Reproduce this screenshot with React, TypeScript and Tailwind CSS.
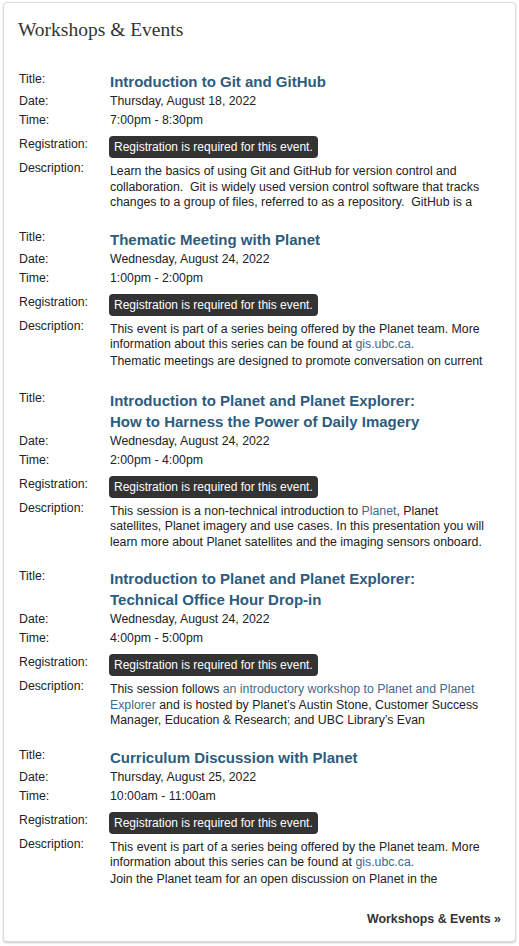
import React from "react";

type Seg = { t: string; link?: boolean };
type Line = { segs: Seg[]; para?: boolean };
type Ev = {
  title: string[];
  date: string;
  time: string;
  desc: Line[];
};

const L = (t: string, para?: boolean): Line => ({ segs: [{ t }], para });

const series: Line[] = [
  L("This event is part of a series being offered by the Planet team. More"),
  {
    segs: [
      { t: "information about this series can be found at " },
      { t: "gis.ubc.ca.", link: true },
    ],
  },
];

const events: Ev[] = [
  {
    title: ["Introduction to Git and GitHub"],
    date: "Thursday, August 18, 2022",
    time: "7:00pm - 8:30pm",
    desc: [
      L("Learn the basics of using Git and GitHub for version control and"),
      L("collaboration.  Git is widely used version control software that tracks"),
      L("changes to a group of files, referred to as a repository.  GitHub is a"),
    ],
  },
  {
    title: ["Thematic Meeting with Planet"],
    date: "Wednesday, August 24, 2022",
    time: "1:00pm - 2:00pm",
    desc: [...series, L("Thematic meetings are designed to promote conversation on current", true)],
  },
  {
    title: ["Introduction to Planet and Planet Explorer:", "How to Harness the Power of Daily Imagery"],
    date: "Wednesday, August 24, 2022",
    time: "2:00pm - 4:00pm",
    desc: [
      {
        segs: [
          { t: "This session is a non-technical introduction to " },
          { t: "Planet", link: true },
          { t: ", Planet" },
        ],
      },
      L("satellites, Planet imagery and use cases. In this presentation you will"),
      L("learn more about Planet satellites and the imaging sensors onboard."),
    ],
  },
  {
    title: ["Introduction to Planet and Planet Explorer:", "Technical Office Hour Drop-in"],
    date: "Wednesday, August 24, 2022",
    time: "4:00pm - 5:00pm",
    desc: [
      {
        segs: [
          { t: "This session follows " },
          { t: "an introductory workshop to Planet and Planet", link: true },
        ],
      },
      {
        segs: [
          { t: "Explorer", link: true },
          { t: " and is hosted by Planet\u2019s Austin Stone, Customer Success" },
        ],
      },
      L("Manager, Education & Research; and UBC Library\u2019s Evan"),
    ],
  },
  {
    title: ["Curriculum Discussion with Planet"],
    date: "Thursday, August 25, 2022",
    time: "10:00am - 11:00am",
    desc: [...series, L("Join the Planet team for an open discussion on Planet in the", true)],
  },
];

function Event({ ev }: { ev: Ev }) {
  const hasPara = ev.desc.some((l) => l.para);
  return (
    <div className="mb-[18px]">
      <div className="flex">
        <div className="w-[91px] shrink-0 leading-[16px]">Title:</div>
        <div className="text-[15px] font-bold leading-[21px] text-[#2c5c7e]">
          {ev.title.map((t, i) => (
            <div key={i}>{t}</div>
          ))}
        </div>
      </div>
      <div className="flex leading-[19px]">
        <div className="w-[91px] shrink-0">Date:</div>
        <div>{ev.date}</div>
      </div>
      <div className="flex leading-[19px]">
        <div className="w-[91px] shrink-0">Time:</div>
        <div>{ev.time}</div>
      </div>
      <div className="mt-[6px] flex">
        <div className="w-[91px] shrink-0 leading-[16px]">Registration:</div>
        <div className="-ml-px">
          <span className="inline-block h-[22px] rounded-[4px] bg-[#333333] px-[5px] pt-[1px] text-[12px] leading-[20px] text-white">
            Registration is required for this event.
          </span>
        </div>
      </div>
      <div className="mt-[3px] flex">
        <div className="w-[91px] shrink-0 leading-[15.5px]">Description:</div>
        <div
          className={
            "overflow-hidden pt-[3px] leading-[15.5px] " +
            (hasPara ? "h-[53px]" : "h-[49.5px]")
          }
        >
          {ev.desc.map((l, i) => (
            <div key={i} className={"whitespace-pre " + (l.para ? "mt-[1.5px]" : "")}>
              {l.segs.map((s, j) =>
                s.link ? (
                  <span key={j} className="text-[#3e6a8c]">
                    {s.t}
                  </span>
                ) : (
                  <span key={j}>{s.t}</span>
                )
              )}
            </div>
          ))}
        </div>
      </div>
    </div>
  );
}

export default function App() {
  return (
    <div className="min-h-[946px] w-[519px] bg-white pl-[3px] pt-[2px]">
      <div
        className="w-[513px] rounded-[4px] border border-[#dcdcdc] bg-white pb-[14px] pl-[15px] pr-[14px] pt-[14px] text-[12.3px] text-[#222222] shadow-[0_1px_2px_rgba(0,0,0,0.22)]"
        style={{ fontFamily: '"Liberation Sans", Arial, sans-serif' }}
      >
        <h2
          className="-ml-px mt-[1px] text-[19.5px] font-normal leading-[24px] text-[#333333]"
          style={{ fontFamily: '"Liberation Serif", Georgia, serif' }}
        >
          Workshops &amp; Events
        </h2>
        <div className="mt-[29px]">
          {events.map((ev, i) => (
            <Event key={i} ev={ev} />
          ))}
        </div>
        <div className="-mt-[15px] pt-[18px] text-right text-[12.4px] font-bold leading-[16px] text-[#333333]">
          Workshops &amp; Events »
        </div>
      </div>
    </div>
  );
}
